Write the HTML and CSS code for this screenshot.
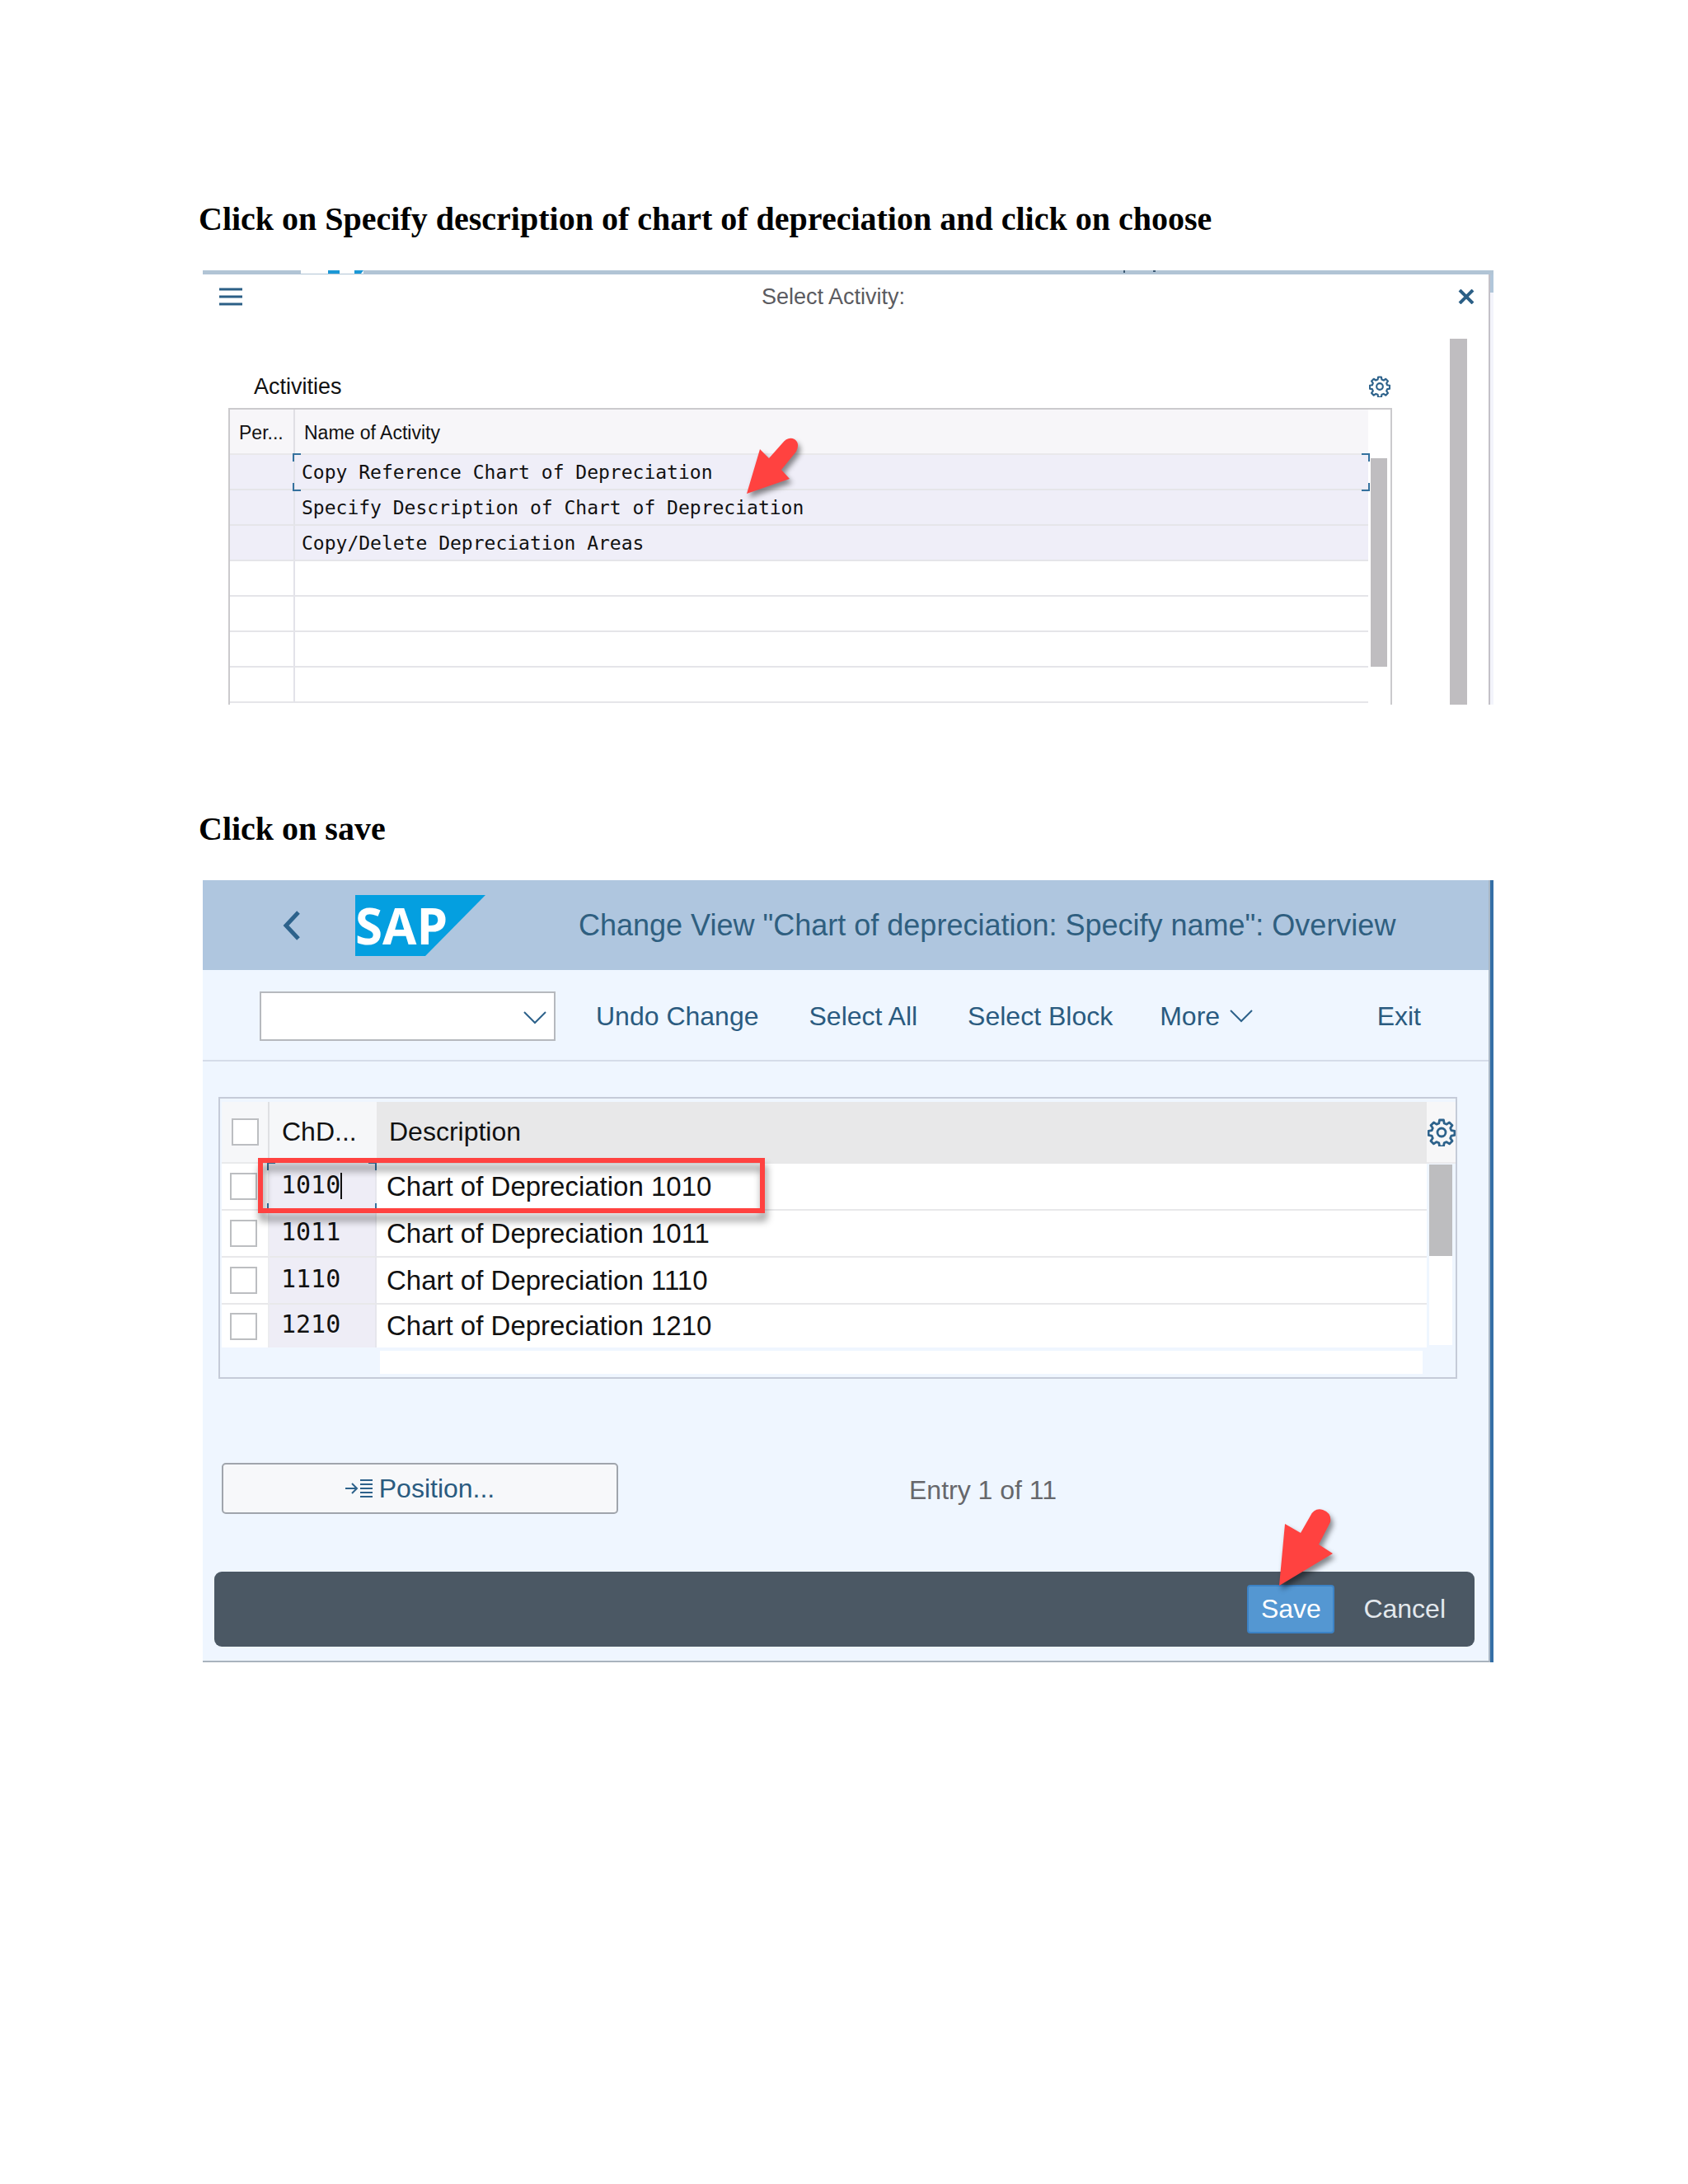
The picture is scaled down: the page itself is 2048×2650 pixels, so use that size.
FILE: index.html
```html
<!DOCTYPE html>
<html lang="en">
<head>
<meta charset="utf-8">
<meta name="viewport" content="width=device-width, initial-scale=1">
<title>Chart of depreciation: description</title>
<link rel="stylesheet" href="styles.css">
</head>
<body>
<svg class="defs" aria-hidden="true">
  <symbol id="gear" viewBox="0 0 34 34">
    <g fill="none" stroke="currentColor" stroke-width="2.8" stroke-linejoin="round">
      <path d="M14.5 2h5l.7 4 3 1.200 3.300-2.300 3.500 3.500-2.300 3.400 1.200 2.900 4 .7v5l-4 .7-1.200 3 2.300 3.300-3.500 3.500-3.400-2.300-2.900 1.200-.7 4h-5l-.7-4-3-1.200-3.300 2.300-3.500-3.500 2.300-3.400-1.200-2.900-4-.7v-5l4-.7 1.200-3-2.300-3.300 3.500-3.500 3.400 2.300 2.900-1.200z"/>
      <circle cx="17" cy="17" r="5"/>
    </g>
  </symbol>
</svg>
<main class="page">
  <section class="step">
    <h2 class="step-title">Click on Specify description of chart of depreciation and click on choose</h2>
    <div class="dialog-shot">
      <div class="strip" aria-hidden="true">
        <svg class="strip-logo" width="76" height="5" viewBox="0 0 76 5"><path d="M0 0h76v4H0z" fill="#fff"/><path d="M33 0h14v4H33zM65 0h11l-3 4h-8z" fill="#1b98d6"/></svg>
        <svg class="strip-marks" width="40" height="5" viewBox="0 0 40 5"><path d="M0 0h2v3H0zM36 0h3v2h-3z" fill="#3c5a74"/></svg>
      </div>
      <div class="dialog-row">
        <div class="dialog">
          <header class="dialog-head">
            <button class="icon-btn" type="button" aria-label="Menu"><svg width="28" height="24" viewBox="0 0 28 24"><path d="M0 3h28M0 12h28M0 21h28" stroke="#2b5f86" stroke-width="3"/></svg></button>
            <h3 class="dialog-title">Select Activity:</h3>
            <button class="icon-btn" type="button" aria-label="Close"><svg width="22" height="18" viewBox="0 0 22 18"><path d="M3 1l16 16M19 1L3 17" stroke="#2b5f86" stroke-width="4"/></svg></button>
          </header>
          <div class="dialog-body">
            <div class="activities">
              <div class="activities-head">
                <h4 class="activities-title">Activities</h4>
                <button class="icon-btn" type="button" aria-label="Table settings"><svg width="26" height="26"><use href="#gear"/></svg></button>
              </div>
              <div class="activities-frame">
                <table class="activities-table">
                  <colgroup><col class="col-per"><col></colgroup>
                  <thead><tr><th>Per...</th><th>Name of Activity</th></tr></thead>
                  <tbody>
                    <tr class="filled"><td></td><td class="active">Copy Reference Chart of Depreciation<span class="bracket"></span></td></tr>
                    <tr class="filled"><td></td><td>Specify Description of Chart of Depreciation</td></tr>
                    <tr class="filled"><td></td><td>Copy/Delete Depreciation Areas</td></tr>
                    <tr><td></td><td></td></tr>
                    <tr><td></td><td></td></tr>
                    <tr><td></td><td></td></tr>
                    <tr><td></td><td></td></tr>
                  </tbody>
                </table>
                <div class="inner-scroll"><div class="inner-thumb"></div></div>
                <svg class="arrow arrow-activity" width="80" height="84" viewBox="0 0 80 84" aria-hidden="true"><path d="M6 74L22 20L33 31L49 13Q56 4 64 8Q71 13 66 23L48 45L58 56Z" fill="#ff4240"/></svg>
              </div>
            </div>
            <div class="outer-thumb"></div>
          </div>
        </div>
        <div class="behind"></div>
      </div>
    </div>
  </section>

  <section class="step">
    <h2 class="step-title">Click on save</h2>
    <div class="app">
      <div class="app-inner">
        <header class="app-head">
          <button class="icon-btn back" type="button" aria-label="Back"><svg width="22" height="36" viewBox="0 0 22 36"><path d="M19 2L4 18l15 16" fill="none" stroke="#2d628b" stroke-width="5"/></svg></button>
          <svg class="logo" width="158" height="74" viewBox="0 0 158 74" role="img" aria-label="SAP">
            <path d="M0 0h158L85 74H0z" fill="#049fe0"/>
            <text class="logo-text" x="0" y="60">SAP</text>
          </svg>
          <h3 class="app-title">Change View "Chart of depreciation: Specify name": Overview</h3>
        </header>
        <div class="toolbar">
          <div class="command">
            <select class="command-field" aria-label="Command"><option></option></select>
            <svg class="command-chevron" width="28" height="16" viewBox="0 0 28 16" aria-hidden="true"><path d="M1 1l13 13L27 1" fill="none" stroke="#2d628b" stroke-width="2"/></svg>
          </div>
          <button class="tool" type="button">Undo Change</button>
          <button class="tool" type="button">Select All</button>
          <button class="tool" type="button">Select Block</button>
          <button class="tool more" type="button">More<svg width="28" height="16" viewBox="0 0 28 16" aria-hidden="true"><path d="M1 1l13 13L27 1" fill="none" stroke="#2d628b" stroke-width="2"/></svg></button>
          <button class="tool exit" type="button">Exit</button>
        </div>
        <div class="charts">
          <div class="charts-main">
            <table class="charts-table">
              <colgroup><col class="col-check"><col class="col-code"><col></colgroup>
              <thead><tr><th><input class="check" type="checkbox" aria-label="Select all rows"></th><th>ChD...</th><th>Description</th></tr></thead>
              <tbody>
                <tr><td><input class="check" type="checkbox" aria-label="Select 1010"></td><td class="code active">1010<span class="caret"></span><span class="bracket"></span></td><td>Chart of Depreciation 1010</td></tr>
                <tr><td><input class="check" type="checkbox" aria-label="Select 1011"></td><td class="code">1011</td><td>Chart of Depreciation 1011</td></tr>
                <tr><td><input class="check" type="checkbox" aria-label="Select 1110"></td><td class="code">1110</td><td>Chart of Depreciation 1110</td></tr>
                <tr class="last"><td><input class="check" type="checkbox" aria-label="Select 1210"></td><td class="code">1210</td><td>Chart of Depreciation 1210</td></tr>
              </tbody>
            </table>
            <div class="h-track"></div>
          </div>
          <div class="charts-side">
            <button class="icon-btn settings" type="button" aria-label="Table settings"><svg width="34" height="34"><use href="#gear"/></svg></button>
            <div class="v-track"><div class="v-thumb"></div></div>
          </div>
          <div class="highlight" aria-hidden="true"></div>
        </div>
        <div class="position-row">
          <button class="position" type="button"><svg width="34" height="22" viewBox="0 0 34 22" aria-hidden="true"><path d="M0 11h13M8 5l6 6-6 6" fill="none" stroke="#2d628b" stroke-width="2"/><path d="M18 1h15M18 6h15M18 11h15M18 16h15M18 21h15" stroke="#2d628b" stroke-width="2"/></svg>Position...</button>
          <p class="entry">Entry 1 of 11</p>
        </div>
        <footer class="actions">
          <button class="save" type="button">Save</button>
          <button class="cancel" type="button">Cancel</button>
          <svg class="arrow arrow-save" width="90" height="110" viewBox="0 0 90 110" aria-hidden="true"><path d="M7 98L14 23L33 34L45 13Q50 3 60 6Q71 10 69 21L55 48L72 59Z" fill="#ff4240"/></svg>
        </footer>
      </div>
    </div>
  </section>
</main>
</body>
</html>
```
FILE: styles.css
```css
* {
  box-sizing: border-box;
}

body {
  margin: 0;
  background: #fff;
  color: #111;
  font-family: "Liberation Sans", Arial, sans-serif;
  font-size: 32px;
}

h2, h3, h4, p {
  margin: 0;
  font-weight: normal;
}

button {
  margin: 0;
  padding: 0;
  border: 0;
  background: none;
  color: inherit;
  font: inherit;
}

table {
  border-spacing: 0;
  table-layout: fixed;
  width: 100%;
}

th, td {
  padding: 0;
  text-align: left;
  font-weight: normal;
  white-space: nowrap;
}

svg {
  display: block;
  flex: none;
}

.defs {
  display: none;
}

.page {
  display: flex;
  flex-direction: column;
  gap: 128px;
  padding: 243px 236px 240px 246px;
}

.step {
  display: flex;
  flex-direction: column;
  gap: 39px;
}

.step-title {
  margin-left: -5px;
  color: #000;
  font: bold 40px/46px "Liberation Serif", "Times New Roman", serif;
}

.icon-btn {
  display: flex;
  align-items: center;
  justify-content: center;
  color: #2d628b;
}

/* Brackets at the corners of the focused cell */
.active {
  position: relative;
}

.bracket {
  --c: #34719e;
  position: absolute;
  inset: -2px -2px -3px -3px;
  background:
    linear-gradient(var(--c), var(--c)) left top / 10px 2px,
    linear-gradient(var(--c), var(--c)) left top / 2px 10px,
    linear-gradient(var(--c), var(--c)) right top / 10px 2px,
    linear-gradient(var(--c), var(--c)) right top / 2px 10px,
    linear-gradient(var(--c), var(--c)) left bottom / 10px 2px,
    linear-gradient(var(--c), var(--c)) left bottom / 2px 10px,
    linear-gradient(var(--c), var(--c)) right bottom / 10px 2px,
    linear-gradient(var(--c), var(--c)) right bottom / 2px 10px;
  background-repeat: no-repeat;
}

.arrow {
  position: absolute;
  filter: drop-shadow(3px 5px 3px rgba(0, 0, 0, 0.45));
}

/* Activity dialog */
.strip {
  display: flex;
  justify-content: space-between;
  padding: 0 409px 0 119px;
  background: #b1c4d5;
}

.dialog-row {
  display: flex;
}

.dialog {
  flex: 1;
  border-right: 2px solid #c3c1c8;
}

.behind {
  width: 4px;
  border-top: 22px solid #b1c6da;
  background: #f3f4fb;
}

.dialog-head {
  display: flex;
  align-items: center;
  height: 54px;
  margin-bottom: 24px;
  padding: 0 16px 0 20px;
}

.dialog-title {
  flex: 1;
  padding-right: 40px;
  color: #5b5b60;
  font-size: 27px;
  text-align: center;
}

.dialog-body {
  display: flex;
  padding: 0 26px 0 31px;
}

.activities {
  flex: 1;
  margin-right: 70px;
}

.activities-head {
  display: flex;
  align-items: center;
  justify-content: space-between;
  padding: 43px 2px 11px 31px;
}

.activities-title {
  font-size: 27px;
  line-height: 30px;
}

.activities-frame {
  position: relative;
  display: flex;
  padding-bottom: 2px;
  border: 2px solid #cbcacd;
  border-bottom: 0;
}

.activities-table {
  flex: 1;
}

.col-per {
  width: 79px;
}

.activities-table th {
  height: 55px;
  padding: 3px 0 0 11px;
  border-right: 2px solid #e0dfe4;
  border-bottom: 2px solid #e9e8eb;
  background: #f7f6f9;
  font-size: 23px;
}

.activities-table td {
  height: 43px;
  padding-left: 8px;
  border-right: 2px solid #e3e3e9;
  border-bottom: 2px solid #e5e5e9;
  font: 23px "DejaVu Sans Mono", monospace;
}

.activities-table th:last-child,
.activities-table td:last-child {
  border-right: 0;
}

.filled td {
  background: #efeef8;
}

.inner-scroll {
  width: 27px;
  padding: 59px 4px 0 3px;
}

.inner-thumb {
  height: 253px;
  background: #bfbdc0;
}

.outer-thumb {
  width: 21px;
  background: #bfbdc0;
}

.arrow-activity {
  top: 28px;
  left: 621px;
}

/* Chart of depreciation view */
.app {
  border-right: 4px solid #356fa6;
}

.app-inner {
  padding-bottom: 17px;
  border-right: 2px solid #a9b7c5;
  border-bottom: 2px solid #a9b3bd;
  background: #eff6ff;
}

.app-head {
  display: flex;
  align-items: center;
  height: 109px;
  padding-left: 97px;
  background: #afc6df;
}

.logo {
  margin: 0 113px 0 66px;
  overflow: visible;
}

.logo-text {
  fill: #fff;
  font: bold 60px "Open Sans", sans-serif;
}

.app-title {
  color: #2f5f80;
  font-size: 36px;
  white-space: nowrap;
}

.toolbar {
  display: flex;
  align-items: center;
  height: 111px;
  padding: 3px 82px 0 69px;
  border-bottom: 2px solid #d5dce9;
  color: #2a5b80;
}

.command {
  position: relative;
  width: 359px;
  margin-right: 49px;
}

.command-field {
  display: block;
  width: 100%;
  height: 60px;
  border: 2px solid #b6b9be;
  border-radius: 0;
  background: #fff;
  appearance: none;
}

.command-chevron {
  position: absolute;
  top: 24px;
  right: 11px;
}

.tool + .tool {
  margin-left: 61px;
}

.tool + .more {
  display: flex;
  align-items: center;
  gap: 12px;
  margin-left: 57px;
}

.tool + .exit {
  margin-left: auto;
}

.charts {
  position: relative;
  display: flex;
  margin: 43px 38px 0 19px;
  padding: 4px 0 4px 2px;
  border: 2px solid #c5cbd8;
}

.charts-main {
  flex: 1;
}

.col-check {
  width: 58px;
}

.col-code {
  width: 130px;
}

.charts-table th {
  height: 75px;
  padding-left: 15px;
  border-bottom: 2px solid #e9eaec;
  background: #f6f7f9;
}

.charts-table th:first-child {
  padding-left: 12px;
  border-right: 2px solid #dfe0e3;
}

.charts-table th:last-child {
  border-bottom-color: #e8e8e9;
  background: #e8e8e9;
}

.charts-table td {
  height: 57px;
  padding-left: 12px;
  border-bottom: 2px solid #e8e8ea;
  background: #fff;
  font-size: 33px;
  line-height: 36px;
}

.charts-table td:first-child {
  padding-left: 10px;
  border-right: 2px solid #ececf0;
}

.charts-table td.code {
  padding: 0 0 4px 14px;
  border-right: 2px solid #e6e6ec;
  background: #eeedf6;
  font: 30px/36px "DejaVu Sans Mono", monospace;
}

.charts-table .last td {
  height: 52px;
  border-bottom: 0;
}

.check {
  display: block;
  width: 33px;
  height: 33px;
  margin: 0;
  border: 2px solid #bcbec1;
  background: #fff;
  appearance: none;
}

.caret {
  display: inline-block;
  width: 2px;
  height: 32px;
  background: #111;
  vertical-align: middle;
}

.h-track {
  height: 28px;
  margin: 4px 5px 0 192px;
  background: #fff;
}

.charts-side {
  width: 35px;
}

.settings {
  width: 100%;
  height: 75px;
  border-bottom: 2px solid #ebebed;
  background: #f7f7f8;
}

.v-track {
  height: 219px;
  margin: 1px 4px 0 3px;
  background: #fff;
}

.v-thumb {
  height: 111px;
  background: #bdbdbf;
}

.highlight {
  position: absolute;
  top: 72px;
  left: 46px;
  width: 615px;
  height: 67px;
  border: 6px solid #ff4240;
  filter: drop-shadow(2px 9px 5px rgba(0, 0, 0, 0.45));
}

.position-row {
  display: flex;
  align-items: center;
  margin: 102px 0 70px 23px;
}

.position {
  display: flex;
  align-items: center;
  justify-content: center;
  gap: 7px;
  width: 481px;
  height: 62px;
  border: 2px solid #a0a5ac;
  border-radius: 5px;
  background: #f7f8fa;
  color: #2a5b80;
}

.entry {
  margin-left: 353px;
  padding-top: 4px;
  color: #66676b;
}

.actions {
  position: relative;
  display: flex;
  align-items: center;
  justify-content: flex-end;
  gap: 35px;
  height: 91px;
  margin: 0 17px 0 14px;
  padding-right: 35px;
  border-radius: 9px;
  background: #4b5864;
}

.save {
  width: 106px;
  height: 59px;
  border: 2px solid #3c82c5;
  border-radius: 4px;
  background: #5497d2;
  color: #fff;
}

.cancel {
  color: #e3e8ed;
}

.arrow-save {
  top: -81px;
  right: 154px;
}
```
